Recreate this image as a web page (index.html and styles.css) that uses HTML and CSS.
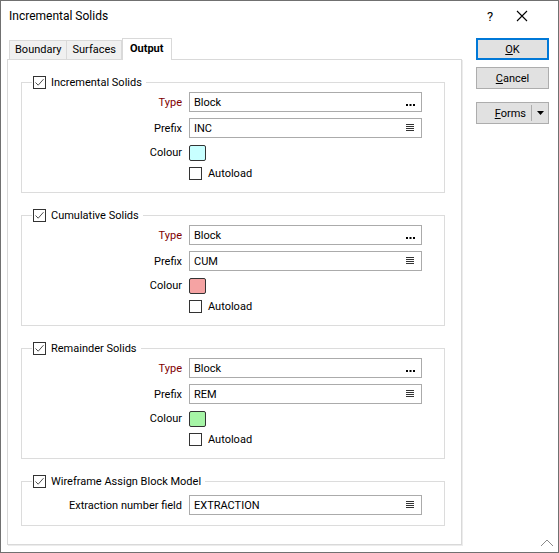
FILE: index.html
```html
<!DOCTYPE html>
<html>
<head>
<meta charset="utf-8">
<title>Incremental Solids</title>
<link rel="stylesheet" href="styles.css">
</head>
<body>
<div class="window">
  <div class="titlebar">
    <span class="title">Incremental Solids</span>
    <span class="help">?</span>
    <svg class="close" width="12" height="12" viewBox="0 0 12 12"><path d="M1 1 L11 11 M11 1 L1 11" stroke="#000" stroke-width="1.1" fill="none"/></svg>
  </div>
  <div class="content">
    <div class="left">
      <div class="tabs">
        <div class="tab">Boundary</div>
        <div class="tab">Surfaces</div>
        <div class="tab active">Output</div>
      </div>
      <div class="panel">
        <fieldset class="group">
          <legend><span class="cb"><svg width="11" height="11" viewBox="0 0 11 11"><path d="M1.5 5.5 L4.2 8.2 L9.5 2.2" stroke="#505050" stroke-width="1" fill="none"/></svg></span>Incremental Solids</legend>
          <div class="rows">
            <span class="lbl req">Type</span><div class="input">Block<svg class="dots" width="9" height="2" viewBox="0 0 9 2"><rect x="0" y="0" width="2" height="2" fill="#000"/><rect x="3.5" y="0" width="2" height="2" fill="#000"/><rect x="7" y="0" width="2" height="2" fill="#000"/></svg></div>
            <span class="lbl">Prefix</span><div class="input">INC<svg class="menu" width="8" height="8" viewBox="0 0 8 8"><path d="M0 0.5 H8 M0 2.5 H8 M0 4.5 H8 M0 6.5 H8" stroke="#333" stroke-width="1"/></svg></div>
            <span class="lbl">Colour</span><div class="cellwrap"><span class="swatch cyan"></span></div>
            <span></span><div class="check"><span class="cb"></span>Autoload</div>
          </div>
        </fieldset>
        <fieldset class="group">
          <legend><span class="cb"><svg width="11" height="11" viewBox="0 0 11 11"><path d="M1.5 5.5 L4.2 8.2 L9.5 2.2" stroke="#505050" stroke-width="1" fill="none"/></svg></span>Cumulative Solids</legend>
          <div class="rows">
            <span class="lbl req">Type</span><div class="input">Block<svg class="dots" width="9" height="2" viewBox="0 0 9 2"><rect x="0" y="0" width="2" height="2" fill="#000"/><rect x="3.5" y="0" width="2" height="2" fill="#000"/><rect x="7" y="0" width="2" height="2" fill="#000"/></svg></div>
            <span class="lbl">Prefix</span><div class="input">CUM<svg class="menu" width="8" height="8" viewBox="0 0 8 8"><path d="M0 0.5 H8 M0 2.5 H8 M0 4.5 H8 M0 6.5 H8" stroke="#333" stroke-width="1"/></svg></div>
            <span class="lbl">Colour</span><div class="cellwrap"><span class="swatch pink"></span></div>
            <span></span><div class="check"><span class="cb"></span>Autoload</div>
          </div>
        </fieldset>
        <fieldset class="group third">
          <legend><span class="cb"><svg width="11" height="11" viewBox="0 0 11 11"><path d="M1.5 5.5 L4.2 8.2 L9.5 2.2" stroke="#505050" stroke-width="1" fill="none"/></svg></span>Remainder Solids</legend>
          <div class="rows">
            <span class="lbl req">Type</span><div class="input">Block<svg class="dots" width="9" height="2" viewBox="0 0 9 2"><rect x="0" y="0" width="2" height="2" fill="#000"/><rect x="3.5" y="0" width="2" height="2" fill="#000"/><rect x="7" y="0" width="2" height="2" fill="#000"/></svg></div>
            <span class="lbl">Prefix</span><div class="input">REM<svg class="menu" width="8" height="8" viewBox="0 0 8 8"><path d="M0 0.5 H8 M0 2.5 H8 M0 4.5 H8 M0 6.5 H8" stroke="#333" stroke-width="1"/></svg></div>
            <span class="lbl">Colour</span><div class="cellwrap"><span class="swatch green"></span></div>
            <span></span><div class="check"><span class="cb"></span>Autoload</div>
          </div>
        </fieldset>
        <fieldset class="group last">
          <legend><span class="cb"><svg width="11" height="11" viewBox="0 0 11 11"><path d="M1.5 5.5 L4.2 8.2 L9.5 2.2" stroke="#505050" stroke-width="1" fill="none"/></svg></span>Wireframe Assign Block Model</legend>
          <div class="rows">
            <span class="lbl">Extraction number field</span><div class="input">EXTRACTION<svg class="menu" width="8" height="8" viewBox="0 0 8 8"><path d="M0 0.5 H8 M0 2.5 H8 M0 4.5 H8 M0 6.5 H8" stroke="#333" stroke-width="1"/></svg></div>
          </div>
        </fieldset>
      </div>
    </div>
    <div class="buttons">
      <div class="btn default"><span><u>O</u>K</span></div>
      <div class="btn"><span><u>C</u>ancel</span></div>
      <div class="btn forms"><span class="ftext"><u>F</u>orms</span><span class="sep"></span><svg class="arrow" width="7" height="4" viewBox="0 0 7 4"><path d="M0 0 L7 0 L3.5 4 Z" fill="#000"/></svg></div>
    </div>
  </div>
  <svg class="grip" width="14" height="8" viewBox="0 0 14 8"><path d="M1 7 L7 1 L13 7" stroke="#8a8a8a" stroke-width="1" fill="none"/></svg>
</div>
</body>
</html>
```

FILE: styles.css
```css
* { box-sizing: border-box; }
html, body { margin: 0; padding: 0; background: #fff; }
body {
  font-family: Roboto, "Noto Sans", "Liberation Sans", sans-serif;
  font-size: 11px;
  color: #000;
}
.window {
  position: relative;
  width: 559px;
  height: 553px;
  border: 1px solid #707070;
  background: #fff;
  display: flex;
  flex-direction: column;
}
.titlebar {
  height: 30px;
  display: flex;
  align-items: center;
  padding-left: 8px;
  flex: none;
}
.title { flex: 1; font-size: 12px; }
.help { width: 12px; margin-right: 20px; text-align: center; font-size: 13px; }
.close { margin-right: 30px; }
.content {
  flex: 1;
  display: flex;
  padding-left: 6px;
}
.left {
  width: 455px;
  margin-top: 7px;
  display: flex;
  flex-direction: column;
}
.tabs {
  display: flex;
  align-items: flex-end;
  height: 21px;
  padding-left: 2px;
  position: relative;
  z-index: 1;
}
.tab {
  height: 19px;
  line-height: 17px;
  padding: 0 5px;
  background: #f0f0f0;
  border: 1px solid #d9d9d9;
  border-bottom: none;
  margin-right: -1px;
}
.tab.active {
  height: 22px;
  margin-bottom: -1px;
  background: #fff;
  font-weight: bold;
  padding: 0 7px;
  line-height: 20px;
  margin-left: 1px;
}
.panel {
  height: 486px;
  border: 1px solid #d9d9d9;
  box-shadow: 1px 1px 0 #ececec;
  padding: 15px 16px 0 13px;
}
.group {
  margin: 0 0 15px 0;
  padding: 0 0 12px 0;
  border: 1px solid #dcdcdc;
  min-width: 0;
}
.group.third { margin-top: 2px; }
.group.last { padding-bottom: 10px; }
.group.last .rows { padding-top: 6px; }
.group legend {
  margin-left: 10px;
  padding: 0 4px 0 1px;
  height: 15px;
  display: flex;
  align-items: center;
}
.cb {
  width: 13px;
  height: 13px;
  border: 1px solid #333;
  background: #fff;
  display: inline-flex;
  align-items: center;
  justify-content: center;
  margin-right: 5px;
  flex: none;
}
.rows {
  display: grid;
  grid-template-columns: 160px 233px;
  column-gap: 7px;
  row-gap: 6px;
  padding-top: 2px;
  align-items: center;
}
.lbl { text-align: right; white-space: nowrap; }
.lbl.req { color: #800000; }
.input {
  height: 20px;
  border: 1px solid #ababab;
  display: flex;
  align-items: center;
  padding: 0 6px 0 4px;
}
.dots { margin-left: auto; margin-top: 5px; margin-right: 0; }
.menu { margin-left: auto; margin-right: 1px; }
.cellwrap { height: 17px; display: flex; align-items: center; }
.swatch {
  width: 17px;
  height: 16px;
  border: 1px solid #333;
  border-radius: 2px;
}
.swatch.cyan { background: #c8ffff; }
.swatch.pink { background: #f5a3a3; }
.swatch.green { background: #a6f5a6; }
.check { height: 13px; display: flex; align-items: center; }
.check .cb { margin-right: 6px; }
.buttons {
  margin-left: 14px;
  margin-top: 7px;
  display: flex;
  flex-direction: column;
  width: 73px;
}
.btn {
  height: 22px;
  background: #e1e1e1;
  border: 1px solid #adadad;
  display: flex;
  align-items: center;
  justify-content: center;
  margin-bottom: 7px;
}
.btn.default { border: 2px solid #0078d7; }
.btn.forms { margin-top: 6px; justify-content: flex-end; padding-right: 4px; }
.ftext { margin-right: 5px; }
.sep { width: 1px; height: 16px; background: #adadad; margin-right: 5px; }
.grip { position: absolute; right: 4px; bottom: 5px; }
```
